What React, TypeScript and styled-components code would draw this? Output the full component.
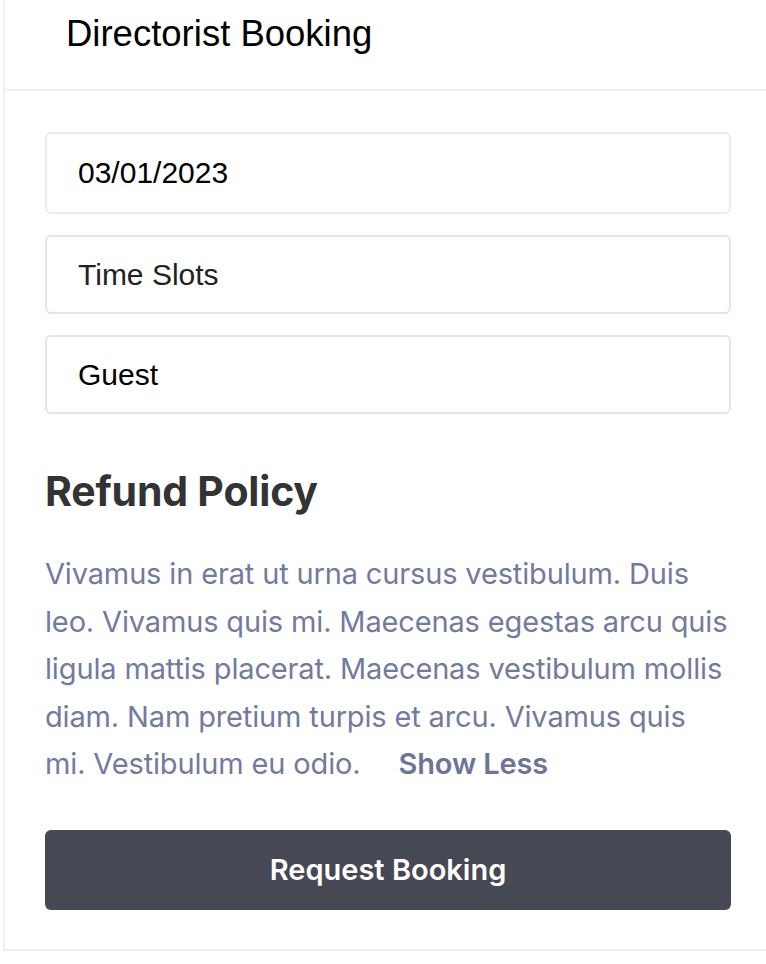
import styled, { createGlobalStyle } from 'styled-components';

const GlobalStyle = createGlobalStyle`
  body {
    margin: 0;
    background: #ffffff;
    overflow: hidden;
  }
  * {
    box-sizing: border-box;
  }
`;

const Page = styled.div`
  padding-left: 3px;
`;

const Card = styled.div`
  width: 770px;
  background: #ffffff;
  border: 2px solid #eeeef4;
  border-top: none;
`;

const Header = styled.div`
  height: 91px;
  padding: 16px 0 0 61px;
  border-bottom: 2px solid #f0f0f5;
  font-family: 'Liberation Sans', Arial, sans-serif;
  font-size: 36.5px;
  line-height: 36px;
  color: #000000;
`;

const Body = styled.div`
  padding: 41px 40px 39px;
`;

const Fields = styled.div`
  display: flex;
  flex-direction: column;
  gap: 21px;
`;

const Field = styled.div<{ $h: number; $border: string; $color: string }>`
  height: ${(p) => p.$h}px;
  display: flex;
  align-items: center;
  padding-left: 31px;
  border: 2px solid ${(p) => p.$border};
  border-radius: 6px;
  font-family: 'Liberation Sans', Arial, sans-serif;
  font-size: 30px;
  color: ${(p) => p.$color};
`;

const Title = styled.h2`
  margin: 52px 0 0;
  font-family: Inter, 'Liberation Sans', sans-serif;
  font-weight: 700;
  font-size: 41px;
  line-height: 50px;
  color: #333333;
  letter-spacing: -0.2px;
`;

const Policy = styled.p`
  margin: 34px 0 0;
  font-family: Inter, 'Liberation Sans', sans-serif;
  font-size: 29px;
  line-height: 47.5px;
  letter-spacing: -0.15px;
  color: #737a9f;
`;

const ShowLess = styled.a`
  margin-left: 30px;
  font-weight: 600;
  color: #6d7499;
  cursor: pointer;
`;

const BookButton = styled.button`
  display: block;
  width: 100%;
  height: 80px;
  margin-top: 42px;
  border: none;
  border-radius: 6px;
  background: #464854;
  color: #ffffff;
  font-family: Inter, 'Liberation Sans', sans-serif;
  font-weight: 600;
  font-size: 29px;
`;

const fields = [
  { label: '03/01/2023', h: 82, border: '#ebebf0', color: '#000000' },
  { label: 'Time Slots', h: 79, border: '#e3e4ef', color: '#222222' },
  { label: 'Guest', h: 79, border: '#e3e4ef', color: '#000000' },
];

export default function App() {
  return (
    <Page>
      <GlobalStyle />
      <Card>
        <Header>Directorist Booking</Header>
        <Body>
          <Fields>
            {fields.map((f) => (
              <Field key={f.label} $h={f.h} $border={f.border} $color={f.color}>
                {f.label}
              </Field>
            ))}
          </Fields>
          <Title>Refund Policy</Title>
          <Policy>
            Vivamus in erat ut urna cursus vestibulum. Duis leo. Vivamus quis mi. Maecenas egestas
            arcu quis ligula mattis placerat. Maecenas vestibulum mollis diam. Nam pretium turpis et
            arcu. Vivamus quis mi. Vestibulum eu odio. <ShowLess>Show Less</ShowLess>
          </Policy>
          <BookButton>Request Booking</BookButton>
        </Body>
      </Card>
    </Page>
  );
}
